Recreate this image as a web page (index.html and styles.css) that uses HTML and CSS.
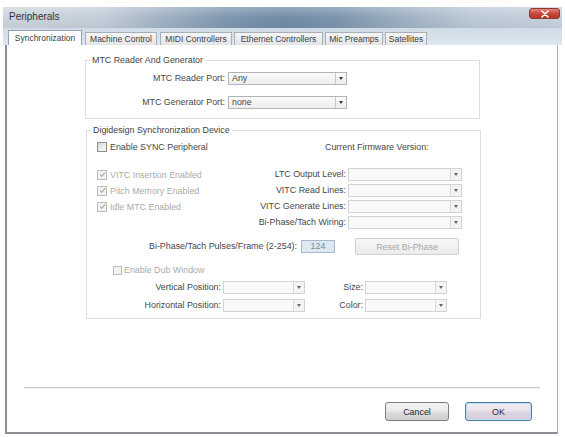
FILE: index.html
```html
<!DOCTYPE html>
<html>
<head>
<meta charset="utf-8">
<title>Peripherals</title>
<link rel="stylesheet" href="styles.css">
</head>
<body>
<div class="window">
  <div class="titlebar">
    <span class="title">Peripherals</span>
    <span class="close"><svg width="12" height="8" viewBox="0 0 12 8"><path d="M3 1 L9 7 M9 1 L3 7" stroke="#fff" stroke-width="1.6" stroke-linecap="round"/></svg></span>
  </div>
  <div class="tabstrip">
    <div class="tab active w-sync">Synchronization</div>
    <div class="tab w-mach">Machine Control</div>
    <div class="tab w-midi">MIDI Controllers</div>
    <div class="tab w-eth">Ethernet Controllers</div>
    <div class="tab w-mic">Mic Preamps</div>
    <div class="tab w-sat">Satellites</div>
  </div>
  <div class="client">
    <fieldset class="group g1">
      <legend>MTC Reader And Generator</legend>
      <div class="portgrid">
        <span class="lbl">MTC Reader Port:</span>
        <div class="select"><span class="val">Any</span><span class="arrow"><i class="tri"></i></span></div>
        <span class="lbl">MTC Generator Port:</span>
        <div class="select"><span class="val">none</span><span class="arrow"><i class="tri"></i></span></div>
      </div>
    </fieldset>

    <fieldset class="group g2">
      <legend>Digidesign Synchronization Device</legend>
      <div class="row-a">
        <label class="chk-item"><span class="check"></span>Enable SYNC Peripheral</label>
        <span class="firmware">Current Firmware Version:</span>
      </div>
      <div class="sync-grid">
        <label class="chk-item dis c1"><span class="check on"><svg width="7" height="7" viewBox="0 0 7 7"><path d="M1 3.6 L2.8 5.4 L6 1.3" fill="none" stroke="#a8a8a8" stroke-width="1.1"/></svg></span>VITC Insertion Enabled</label>
        <span class="lbl">LTC Output Level:</span>
        <div class="select dsel"><span class="val"></span><span class="arrow"><i class="tri"></i></span></div>

        <label class="chk-item dis c1"><span class="check on"><svg width="7" height="7" viewBox="0 0 7 7"><path d="M1 3.6 L2.8 5.4 L6 1.3" fill="none" stroke="#a8a8a8" stroke-width="1.1"/></svg></span>Pitch Memory Enabled</label>
        <span class="lbl">VITC Read Lines:</span>
        <div class="select dsel"><span class="val"></span><span class="arrow"><i class="tri"></i></span></div>

        <label class="chk-item dis c1"><span class="check on"><svg width="7" height="7" viewBox="0 0 7 7"><path d="M1 3.6 L2.8 5.4 L6 1.3" fill="none" stroke="#a8a8a8" stroke-width="1.1"/></svg></span>Idle MTC Enabled</label>
        <span class="lbl">VITC Generate Lines:</span>
        <div class="select dsel"><span class="val"></span><span class="arrow"><i class="tri"></i></span></div>

        <span class="c1"></span>
        <span class="lbl">Bi-Phase/Tach Wiring:</span>
        <div class="select dsel"><span class="val"></span><span class="arrow"><i class="tri"></i></span></div>
      </div>
      <div class="row-c">
        <span class="lbl pulses">Bi-Phase/Tach Pulses/Frame (2-254):</span>
        <span class="numbox">124</span>
        <span class="btn disabled">Reset Bi-Phase</span>
      </div>
      <div class="row-d">
        <label class="chk-item dis"><span class="check"></span>Enable Dub Window</label>
      </div>
      <div class="dub-grid">
        <span class="lbl">Vertical Position:</span>
        <div class="select dsel"><span class="val"></span><span class="arrow"><i class="tri"></i></span></div>
        <span class="lbl">Size:</span>
        <div class="select dsel"><span class="val"></span><span class="arrow"><i class="tri"></i></span></div>
        <span class="lbl">Horizontal Position:</span>
        <div class="select dsel"><span class="val"></span><span class="arrow"><i class="tri"></i></span></div>
        <span class="lbl">Color:</span>
        <div class="select dsel"><span class="val"></span><span class="arrow"><i class="tri"></i></span></div>
      </div>
    </fieldset>

    <div class="separator"></div>
    <div class="buttons">
      <span class="btn cancel">Cancel</span>
      <span class="btn ok">OK</span>
    </div>
  </div>
</div>
</body>
</html>
```

FILE: styles.css
```css
* { box-sizing: border-box; }
html, body { margin: 0; padding: 0; background: #fff; }
body {
  font-family: "Liberation Sans", "DejaVu Sans", Arial, sans-serif;
  font-size: 8.9px;
  color: #474747;
}
.window {
  width: 565px;
  height: 437px;
  padding-top: 7px;
  background: #fff;
  overflow: hidden;
}
.titlebar {
  height: 21px;
  margin: 0 3px;
  display: flex;
  justify-content: space-between;
  align-items: flex-start;
  background:
    linear-gradient(180deg, rgba(255,255,255,0.25) 0%, rgba(255,255,255,0) 50%, rgba(0,0,0,0.04) 100%),
    linear-gradient(90deg, #cdd5dd 0%, #c3ced9 18%, #a2b3c4 28%, #7f97af 40%, #728ca6 50%, #7d95ad 60%, #9fb1c3 72%, #bccad7 84%, #c6d2dd 100%);
}
.title {
  padding: 4px 0 0 6px;
  font-size: 10px;
  line-height: 11px;
  color: #333;
}
.close {
  width: 31px;
  height: 11px;
  margin: 1px 2px 0 0;
  border: 1px solid #8d3a30;
  border-radius: 3px;
  background: linear-gradient(180deg, #e2867a 0%, #c9493a 50%, #b93526 100%);
  display: flex;
  align-items: center;
  justify-content: center;
}
.tabstrip {
  height: 17px;
  margin: 0 3px;
  padding-left: 5px;
  display: flex;
  align-items: flex-end;
  background: linear-gradient(180deg, #cfdbe6 0%, #dfe7ef 100%);
}
.tab {
  height: 13px;
  margin-right: 2px;
  border: 1px solid #a7b0b9;
  border-bottom: none;
  background: linear-gradient(180deg, #f6f6f6 0%, #e2e4e6 100%);
  font-size: 8.5px;
  line-height: 12px;
  text-align: center;
  white-space: nowrap;
  color: #404040;
  overflow: hidden;
}
.tab.active {
  height: 15px;
  background: #fff;
  border-color: #98a2ac;
  line-height: 14px;
}
.w-sync { width: 74px; margin-right: 3px; }
.w-mach { width: 72px; margin-right: 3px; }
.w-midi { width: 72px; }
.w-eth  { width: 89px; }
.w-mic  { width: 58px; }
.w-sat  { width: 42px; }

.client {
  height: 389px;
  margin: 0 7px 0 5px;
  border-left: 2px solid #8c9095;
  border-right: 1px solid #a9aeb4;
  border-bottom: 2px solid #8c9095;
  background: #fff;
  padding-top: 10px;
}
.group {
  margin: 0;
  padding: 0;
  border: 1px solid #dedede;
  width: 395px;
}
.group legend {
  margin-left: 4px;
  padding: 0 2px;
  line-height: 10px;
  color: #444;
}
.g1 { margin-left: 78px; height: 64px; }
.g2 { margin-left: 79px; margin-top: 6px; height: 194px; }

.lbl { text-align: right; white-space: nowrap; line-height: 13px; }

.portgrid {
  display: grid;
  grid-template-columns: 139px 119px;
  column-gap: 3px;
  row-gap: 11px;
  padding-top: 7px;
  align-items: center;
}
.select {
  display: flex;
  height: 13px;
  border: 1px solid #b4b4b4;
  background: linear-gradient(180deg, #fbfbfb 0%, #ededed 100%);
}
.select .val { flex: 1; padding-left: 3px; line-height: 11px; }
.select .arrow {
  width: 11px;
  border-left: 1px solid #c9c9c9;
  display: flex;
  align-items: center;
  justify-content: center;
}
.tri {
  width: 0; height: 0;
  border-left: 2.5px solid transparent;
  border-right: 2.5px solid transparent;
  border-top: 3px solid #333;
}
.dsel {
  border-color: #d3d3d3;
  background: #fafafa;
}
.dsel .arrow { border-left-color: #d8d8d8; background: #f4f4f4; }
.dsel .tri { border-top-color: #666; }

.row-a {
  display: flex;
  align-items: center;
  height: 10px;
  margin-top: 7px;
  padding-left: 10px;
}
.row-a .chk-item { width: 228px; }
.firmware { white-space: nowrap; }

.chk-item { display: flex; align-items: center; white-space: nowrap; }
.check {
  flex: none;
  width: 10px;
  height: 10px;
  margin-right: 3px;
  border: 1px solid #8f8f8f;
  background: linear-gradient(135deg, #dcdcdc 0%, #f8f8f8 100%);
  display: flex;
  align-items: center;
  justify-content: center;
}
.chk-item.dis { color: #ababab; }
.chk-item.dis .check { border-color: #bdbdbd; background: #f3f3f3; }

.sync-grid {
  display: grid;
  grid-template-columns: 163px 98px 114px;
  grid-auto-rows: 13px;
  row-gap: 3px;
  margin-top: 16px;
  align-items: center;
}
.sync-grid .c1 { padding-left: 10px; }
.sync-grid .lbl { padding-right: 2px; }

.row-c {
  display: flex;
  align-items: center;
  margin-top: 9px;
  height: 17px;
}
.pulses { width: 210px; }
.numbox {
  width: 34px;
  height: 13px;
  margin-left: 4px;
  border: 1px solid #a9b9cc;
  background: #dfe8f2;
  color: #7a8a9a;
  text-align: center;
  line-height: 11px;
}
.btn {
  display: flex;
  align-items: center;
  justify-content: center;
  border-radius: 2px;
  white-space: nowrap;
}
.btn.disabled {
  width: 104px;
  height: 17px;
  margin-left: 20px;
  border: 1px solid #cfcfcf;
  background: linear-gradient(180deg, #f7f7f7 0%, #ebebeb 100%);
  color: #a8a8a8;
}
.row-d {
  margin-top: 10px;
  padding-left: 26px;
  height: 10px;
  display: flex;
  align-items: center;
}
.row-d .check { width: 9px; height: 9px; margin-right: 2px; }
.dub-grid {
  display: grid;
  grid-template-columns: 134px 82px 56px 82px;
  column-gap: 2px;
  row-gap: 5px;
  grid-auto-rows: 13px;
  margin-top: 6px;
  align-items: center;
}

.separator {
  margin: 68px 0 0 17px;
  width: 516px;
  height: 2px;
  border-top: 1px solid #c9c9c9;
  border-bottom: 1px solid #f2f2f2;
  background: #dcdcdc;
}
.buttons {
  display: flex;
  justify-content: flex-end;
  gap: 16px;
  margin-top: 13px;
  padding-right: 25px;
}
.btn.cancel, .btn.ok {
  height: 19px;
  border-radius: 3px;
  color: #2a2a2a;
}
.btn.cancel {
  width: 64px;
  border: 1px solid #7e7e7e;
  background: linear-gradient(180deg, #f2f2f2 0%, #ebebeb 45%, #dcdcdc 55%, #cfcfcf 100%);
}
.btn.ok {
  width: 67px;
  border: 1px solid #4f7a98;
  box-shadow: inset 0 0 0 1px #b9e4f6;
  background: linear-gradient(180deg, #f3eef4 0%, #eae3ec 45%, #ddd3e0 55%, #d5cde0 100%);
}
```
